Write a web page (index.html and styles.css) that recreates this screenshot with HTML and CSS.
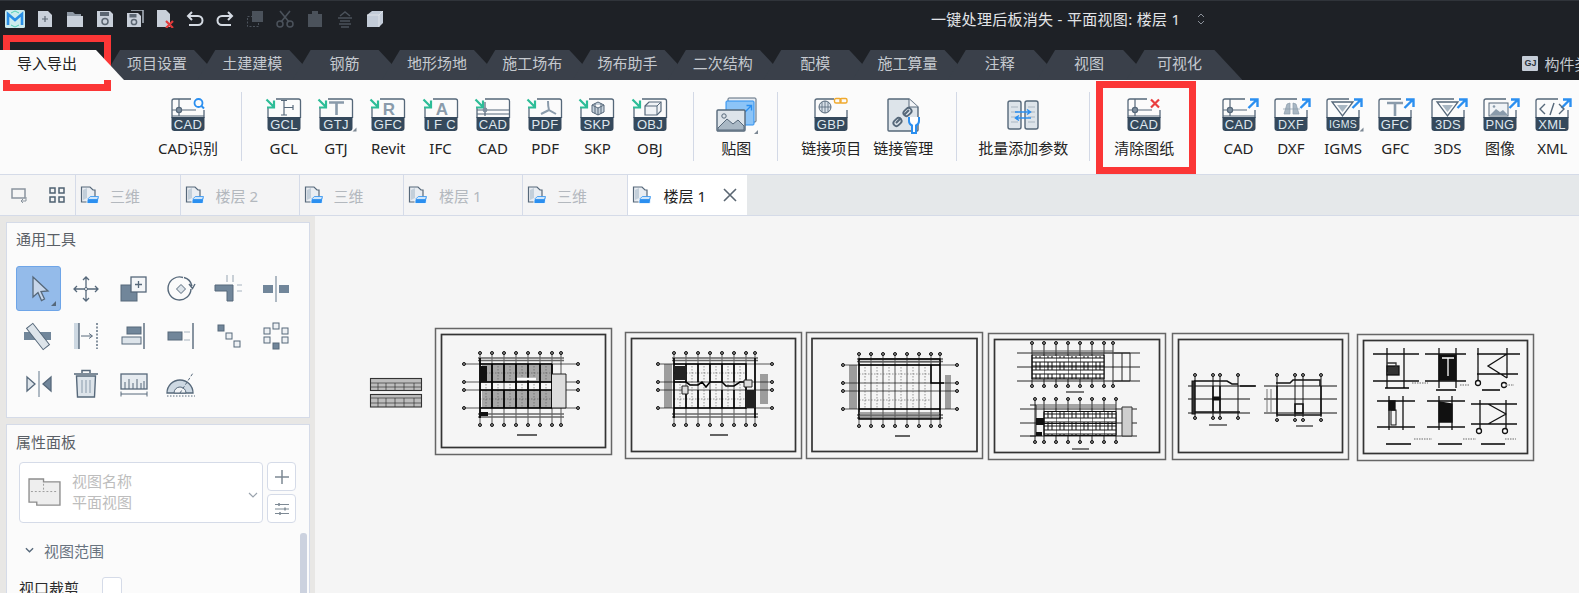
FILE: index.html
```html
<!DOCTYPE html>
<html lang="zh-CN">
<head>
<meta charset="utf-8">
<title>一键处理后板消失</title>
<link rel="stylesheet" href="styles.css">
</head>
<body>
<svg class="defs" aria-hidden="true">
  <defs>
    <g id="f-in">
      <path d="M14 1H36.5a2 2 0 0 1 2 2V20M6 9V20" fill="none" stroke="#56687a" stroke-width="1.3"/>
      <path d="M5.5 19h33v11a3 3 0 0 1-3 3h-27a3 3 0 0 1-3-3z" fill="#35495c"/>
      <path d="M4.5 1.5L11.5 8.5M12 2.5V9.5H5" fill="none" stroke="#2dbd97" stroke-width="2.2"/>
    </g>
    <g id="f-out">
      <path d="M6 20V3a2 2 0 0 1 2-2H28M38 12V20" fill="none" stroke="#56687a" stroke-width="1.3"/>
      <path d="M5.5 19h33v11a3 3 0 0 1-3 3h-27a3 3 0 0 1-3-3z" fill="#35495c"/>
      <path d="M31.5 10L39 2.5M33 1.5H40.5V9" fill="none" stroke="#2b8ff0" stroke-width="2.4"/>
    </g>
    <g id="cad-mark" fill="none" stroke="#56687a" stroke-width="1.2">
      <path d="M13 1V18M6 18H38M6 12H30"/>
      <circle cx="13" cy="12" r="2.6" fill="#7d8e9e"/>
    </g>
    <g id="tabdoc">
      <path d="M1.500 1H10L13 4H15V16H1.500Z" fill="#e9edf2" stroke="#56687a" stroke-width="1.200"/>
      <path d="M3 4L7 2V12L3 14Z" fill="#c3cfda"/>
      <path d="M7 14.500L10 11H19L18 17.500H7Z" fill="#2b8ff0" stroke="#fff" stroke-width=".8"/>
      <path d="M8 12.800L10.300 10.500H18.500L17.500 13.500H8Z" fill="#cfe6fb" stroke="#2b8ff0" stroke-width=".8"/>
    </g>
    <g id="axes" fill="none" stroke="#111" stroke-width=".7">
      <path d="M0 2V71M12 2V71M24 2V71M36 2V71M48 2V71M60 2V71M72 2V71M81 2V71"/>
      <path d="M-14 12H98M-14 30H98M-14 38H98M-14 56H98"/>
      <path d="M-2 6H84M-2 62H84M-2 8.500H84M-2 65H84" stroke="#666" stroke-width="1.300"/>
      <path d="M6 14V56M18 14V56M30 14V56M42 14V56M54 14V56M66 14V56M0 21H72M0 47H72" stroke="#555" stroke-width=".6" stroke-dasharray="1.500 1.500"/>
      <g fill="#888" stroke-width="1">
        <circle cx="0" cy="1" r="1.500"/><circle cx="12" cy="1" r="1.500"/><circle cx="24" cy="1" r="1.500"/><circle cx="36" cy="1" r="1.500"/><circle cx="48" cy="1" r="1.500"/><circle cx="60" cy="1" r="1.500"/><circle cx="72" cy="1" r="1.500"/><circle cx="81" cy="1" r="1.500"/>
        <circle cx="0" cy="73" r="1.500"/><circle cx="12" cy="73" r="1.500"/><circle cx="24" cy="73" r="1.500"/><circle cx="36" cy="73" r="1.500"/><circle cx="48" cy="73" r="1.500"/><circle cx="60" cy="73" r="1.500"/><circle cx="72" cy="73" r="1.500"/><circle cx="81" cy="73" r="1.500"/>
        <circle cx="-16" cy="12" r="1.500"/><circle cx="-16" cy="30" r="1.500"/><circle cx="-16" cy="38" r="1.500"/><circle cx="-16" cy="56" r="1.500"/>
        <circle cx="98" cy="12" r="1.500"/><circle cx="98" cy="30" r="1.500"/><circle cx="98" cy="38" r="1.500"/><circle cx="98" cy="56" r="1.500"/>
      </g>
    </g>
    <pattern id="win" width="12" height="12" patternUnits="userSpaceOnUse">
      <rect width="12" height="12" fill="#fff"/>
      <path d="M0 0V12M0 2H12M0 6H12M0 10H12M4 2V10M8 2V10" fill="none" stroke="#111" stroke-width="1"/>
    </pattern>
    <g id="sub" fill="none" stroke="#111" stroke-width="1.200">
      <path d="M0 0H72M0 12H72M0 24H72M0 0V24M72 0V24"/>
    </g>
  </defs>
</svg>

<header class="titlebar">
  <svg class="logo" viewBox="0 0 20 18"><rect width="20" height="18" rx="1.500" fill="#cdecee"/><path d="M3 15V4L10 10L17 4V15" fill="none" stroke="#2a8fe6" stroke-width="2.600"/><path d="M6 3L10 1L14 3M6 15L10 17L14 15" fill="none" stroke="#53d1b8"/></svg>
  <div class="quick">
    <svg class="qi" viewBox="0 0 18 18"><path d="M2 1H12L16 5V17H2Z" fill="#c9d0da"/><path d="M9 6V12M6 9H12" stroke="#5c6672" stroke-width="1.200"/></svg>
    <svg class="qi" viewBox="0 0 18 18"><path d="M1 2H7L9 4H15V6H1Z" fill="#8e98a4"/><path d="M1 6H17V17H1Z" fill="#c9d0da"/></svg>
    <svg class="qi" viewBox="0 0 18 18"><path d="M1 1H14L17 4V17H1Z" fill="#c9d0da"/><rect x="4" y="2" width="9" height="4" fill="#5c6672"/><circle cx="9" cy="11.500" r="3" fill="none" stroke="#5c6672" stroke-width="1.500"/></svg>
    <svg class="qi" viewBox="0 0 18 18"><path d="M5 0H17V13" fill="none" stroke="#aeb6c1" stroke-width="1.500"/><path d="M1 3H12L15 6V17H1Z" fill="#c9d0da"/><rect x="3.500" y="4" width="7" height="3.500" fill="#5c6672"/><circle cx="8" cy="12" r="2.600" fill="none" stroke="#5c6672" stroke-width="1.500"/></svg>
    <svg class="qi" viewBox="0 0 18 18"><path d="M1 0H10L14 4V17H1Z" fill="#c9d0da"/><path d="M10 11L17 18M17 11L10 18" stroke="#e23b3b" stroke-width="2.200"/></svg>
    <svg class="qi" viewBox="0 0 18 18"><path d="M6 2L2 6L6 10" fill="none" stroke="#d5dbe3" stroke-width="2"/><path d="M2.500 6H12a4.500 4.500 0 0 1 0 9H3" fill="none" stroke="#d5dbe3" stroke-width="2"/></svg>
    <svg class="qi" viewBox="0 0 18 18"><path d="M12 2L16 6L12 10" fill="none" stroke="#d5dbe3" stroke-width="2"/><path d="M15.500 6H6a4.500 4.500 0 0 0 0 9H15" fill="none" stroke="#d5dbe3" stroke-width="2"/></svg>
    <svg class="qi" viewBox="0 0 18 18"><rect x="6" y="1" width="11" height="11" fill="#4b525b"/><rect x="1.500" y="6.500" width="11" height="10" fill="none" stroke="#4b525b" stroke-dasharray="2 1.500"/></svg>
    <svg class="qi" viewBox="0 0 18 18"><path d="M4 1L13 12M14 1L5 12" stroke="#4b525b" stroke-width="1.600"/><circle cx="4" cy="14" r="3" fill="none" stroke="#4b525b" stroke-width="1.500"/><circle cx="14" cy="14" r="3" fill="none" stroke="#4b525b" stroke-width="1.500"/></svg>
    <svg class="qi" viewBox="0 0 18 18"><rect x="2" y="4" width="14" height="13" fill="#4b525b"/><rect x="6" y="1" width="6" height="4" fill="#4b525b"/></svg>
    <svg class="qi" viewBox="0 0 18 18"><path d="M4 6L9 2L14 6M2 8H16M4 11H14M3 14H15M5 17H13" fill="none" stroke="#4b525b" stroke-width="1.500"/></svg>
    <svg class="qi" viewBox="0 0 18 18"><path d="M1 5L6 1H17V13L13 17H1Z" fill="#c3ccd8"/><path d="M1 5H13V17M13 5L17 1" fill="none" stroke="#e4e8ee" stroke-width=".8"/></svg>
  </div>
  <div class="doc-title">一键处理后板消失 - 平面视图: 楼层 1</div>
  <svg class="updown" viewBox="0 0 8 14"><path d="M1 5L4 2L7 5M1 9L4 12L7 9" fill="none" stroke="#8b919a"/></svg>
</header>

<nav class="ribbon-tabs">
  <div class="rtab rtab-active">导入导出</div>
  <div class="rtab rtab-first">项目设置</div>
  <div class="rtab">土建建模</div>
  <div class="rtab rtab-2">钢筋</div>
  <div class="rtab">地形场地</div>
  <div class="rtab">施工场布</div>
  <div class="rtab">场布助手</div>
  <div class="rtab">二次结构</div>
  <div class="rtab rtab-2">配模</div>
  <div class="rtab">施工算量</div>
  <div class="rtab rtab-2">注释</div>
  <div class="rtab rtab-2">视图</div>
  <div class="rtab rtab-3">可视化</div>
  <div class="lib"><span class="lib-badge">GJ</span><span class="lib-name">构件类</span></div>
</nav>

<section class="ribbon">
  <div class="item w72">
    <svg class="ico" viewBox="0 0 44 36"><path d="M6 20V3a2 2 0 0 1 2-2H25M38 12V20" fill="none" stroke="#56687a" stroke-width="1.300"/><path d="M5.500 19h33v11a3 3 0 0 1-3 3h-27a3 3 0 0 1-3-3z" fill="#35495c"/><use href="#cad-mark"/><circle cx="32.500" cy="5" r="4" fill="none" stroke="#2b8ff0" stroke-width="1.800"/><path d="M35.500 8L38 10.500" stroke="#2b8ff0" stroke-width="2"/><text class="ic" x="22" y="30.500">CAD</text></svg>
    <span class="lbl">CAD识别</span>
  </div>
  <i class="sep"></i>
  <div class="item item-pull">
    <svg class="ico" viewBox="0 0 44 36"><use href="#f-in"/><path d="M19 2.500H25M22 2.500V17M19 17H25M22 9.500H31M31 7V12" fill="none" stroke="#56687a" stroke-width="1.200"/><text class="ic" x="22" y="30.500">GCL</text></svg>
    <span class="lbl">GCL</span>
  </div>
  <div class="item">
    <svg class="ico" viewBox="0 0 44 36"><use href="#f-in"/><path d="M15 4.500H30M22.500 4.500V17" fill="none" stroke="#8a9bab" stroke-width="2.600"/><path d="M38.500 33.500h4v-4z" fill="#7c8894"/><text class="ic" x="22" y="30.500">GTJ</text></svg>
    <span class="lbl">GTJ</span>
  </div>
  <div class="item">
    <svg class="ico" viewBox="0 0 44 36"><use href="#f-in"/><text class="gl" x="23" y="16.500">R</text><text class="ic" x="22" y="30.500">GFC</text></svg>
    <span class="lbl">Revit</span>
  </div>
  <div class="item">
    <svg class="ico" viewBox="0 0 44 36"><use href="#f-in"/><text class="gl" x="23" y="16.500">A</text><text class="ic" x="22" y="30.500">I F C</text></svg>
    <span class="lbl">IFC</span>
  </div>
  <div class="item">
    <svg class="ico" viewBox="0 0 44 36"><use href="#f-in"/><path d="M14 4V18M6 12H38" fill="none" stroke="#56687a" stroke-width="1.200"/><path d="M6 16H38" stroke="#56687a"/><circle cx="14" cy="12" r="2.400" fill="#7d8e9e"/><text class="ic" x="22" y="30.500">CAD</text></svg>
    <span class="lbl">CAD</span>
  </div>
  <div class="item">
    <svg class="ico" viewBox="0 0 44 36"><use href="#f-in"/><path d="M25 3C25 8 25 9 26 12L33 16M26 12L18 16" fill="none" stroke="#8a9bab" stroke-width="2"/><text class="ic" x="22" y="30.500">PDF</text></svg>
    <span class="lbl">PDF</span>
  </div>
  <div class="item">
    <svg class="ico" viewBox="0 0 44 36"><use href="#f-in"/><path d="M23 4L29 7V14L23 17L17 14V7ZM17 7L23 10L29 7M23 10V17M20 5.500V15.500M26 5.500V15.500" fill="#c6d1db" stroke="#56687a"/><text class="ic" x="22" y="30.500">SKP</text></svg>
    <span class="lbl">SKP</span>
  </div>
  <div class="item">
    <svg class="ico" viewBox="0 0 44 36"><use href="#f-in"/><path d="M17 8L21 4H33V13L29 17H17Z" fill="#f0f3f6" stroke="#56687a" stroke-width="1.200"/><path d="M17 8H29V17M29 8L33 4" fill="none" stroke="#56687a"/><text class="ic" x="22" y="30.500">OBJ</text></svg>
    <span class="lbl">OBJ</span>
  </div>
  <i class="sep"></i>
  <div class="item w48">
    <svg class="ico" viewBox="0 0 44 36"><rect x="14" y="0" width="28" height="24" rx="1" fill="#e9edf2" stroke="#56687a"/><rect x="12" y="3" width="28" height="24" rx="1" fill="#8cc4f7" stroke="#2b8ff0"/><path d="M31 14L37 8M32.500 7.500H37.500V12.500" fill="none" stroke="#2b8ff0" stroke-width="1.400"/><rect x="3" y="12" width="28" height="21" rx="1" fill="#dde4ea" stroke="#56687a" stroke-width="1.400"/><path d="M4 30L13 21L19 26L24 22L30 28V32H4Z" fill="#a9b8c5" stroke="#56687a"/><circle cx="10" cy="18" r="2.200" fill="none" stroke="#56687a"/><path d="M40 36h4v-4z" fill="#7c8894"/></svg>
    <span class="lbl">贴图</span>
  </div>
  <i class="sep"></i>
  <div class="item w72">
    <svg class="ico" viewBox="0 0 44 36"><path d="M6 20V3a2 2 0 0 1 2-2H25M38 12V20" fill="none" stroke="#56687a" stroke-width="1.300"/><path d="M5.500 19h33v11a3 3 0 0 1-3 3h-27a3 3 0 0 1-3-3z" fill="#35495c"/><circle cx="16" cy="9" r="6" fill="#d8e0e8" stroke="#56687a"/><path d="M10 9H22M16 3V15M13 4V14M19 4V14" stroke="#56687a" stroke-width=".8"/><rect x="25.500" y="0.500" width="6.500" height="4.500" rx="1.500" fill="none" stroke="#f0a92d" stroke-width="1.400"/><rect x="31" y="0.500" width="7" height="4.500" rx="1.500" fill="none" stroke="#f0a92d" stroke-width="1.400"/><text class="ic" x="22" y="30.500">GBP</text></svg>
    <span class="lbl">链接项目</span>
  </div>
  <div class="item w72">
    <svg class="ico" viewBox="0 0 44 36"><path d="M7 2a1 1 0 0 1 1-1H28L37 9V32a1 1 0 0 1-1 1H8a1 1 0 0 1-1-1Z" fill="#dde4ea" stroke="#56687a" stroke-width="1.400"/><path d="M28 1V9H37" fill="#f3f5f8" stroke="#56687a"/><path d="M15 25L20 20M23 17L28 12" stroke="#56687a" stroke-width="2"/><rect x="12" y="21" width="9" height="6" rx="3" transform="rotate(-45 16.500 24)" fill="none" stroke="#56687a" stroke-width="1.800"/><rect x="22" y="11" width="9" height="6" rx="3" transform="rotate(-45 26.500 14)" fill="none" stroke="#56687a" stroke-width="1.800"/><path d="M28 19V23a5 5 0 0 0 3 4.500V35H35V27.500a5 5 0 0 0 3-4.500V19" fill="#fff" stroke="#2b8ff0" stroke-width="2"/></svg>
    <span class="lbl">链接管理</span>
  </div>
  <i class="sep"></i>
  <div class="item w98">
    <svg class="ico" viewBox="0 0 44 36"><rect x="7" y="3" width="13" height="28" rx="2" fill="#dde4ea" stroke="#56687a" stroke-width="1.400"/><rect x="24" y="3" width="13" height="28" rx="2" fill="#dde4ea" stroke="#56687a" stroke-width="1.400"/><path d="M10 9H17M10 14H17M10 19H17M10 24H17M27 9H34M27 14H34M27 19H34M27 24H34" stroke="#aab6c1"/><path d="M14 14H29M26 11.500L29.500 14L26 16.500M30 20H15M18 17.500L14.500 20L18 22.500" fill="none" stroke="#2b8ff0" stroke-width="1.500"/></svg>
    <span class="lbl">批量添加参数</span>
  </div>
  <i class="sep"></i>
  <div class="item w74">
    <svg class="ico" viewBox="0 0 44 36"><path d="M6 20V3a2 2 0 0 1 2-2H25M38 12V20" fill="none" stroke="#56687a" stroke-width="1.300"/><path d="M5.500 19h33v11a3 3 0 0 1-3 3h-27a3 3 0 0 1-3-3z" fill="#35495c"/><use href="#cad-mark"/><path d="M29 1.500L37 9.500M37 1.500L29 9.500" stroke="#ea3f3f" stroke-width="2.200"/><text class="ic" x="22" y="30.500">CAD</text></svg>
    <span class="lbl">清除图纸</span>
  </div>
  <div class="item item-gap">
    <svg class="ico" viewBox="0 0 44 36"><use href="#f-out"/><use href="#cad-mark"/><text class="ic" x="22" y="30.500">CAD</text></svg>
    <span class="lbl">CAD</span>
  </div>
  <div class="item">
    <svg class="ico" viewBox="0 0 44 36"><use href="#f-out"/><path d="M15 16L18 6L21 5V16ZM24 5L27 6L30 16H24ZM14 11H31" fill="#a9b7c3" stroke="#8a9bab" stroke-width=".7"/><text class="ic ic-sm" x="22" y="30.500">DXF</text></svg>
    <span class="lbl">DXF</span>
  </div>
  <div class="item">
    <svg class="ico" viewBox="0 0 44 36"><use href="#f-out"/><path d="M11 4H32L21.500 18Z" fill="none" stroke="#56687a" stroke-width="1.300"/><path d="M16 7H27L21.500 14Z" fill="#a9b7c3"/><path d="M38.500 33.500h4v-4z" fill="#7c8894"/><text class="ic ic-xs" x="22" y="30">IGMS</text></svg>
    <span class="lbl">IGMS</span>
  </div>
  <div class="item">
    <svg class="ico" viewBox="0 0 44 36"><use href="#f-out"/><path d="M14 5H30M22 5V18" fill="none" stroke="#8a9bab" stroke-width="2.600"/><text class="ic" x="22" y="30.500">GFC</text></svg>
    <span class="lbl">GFC</span>
  </div>
  <div class="item">
    <svg class="ico" viewBox="0 0 44 36"><use href="#f-out"/><path d="M11 4H32L21.500 18Z" fill="none" stroke="#56687a" stroke-width="1.300"/><path d="M16 7H27L21.500 14Z" fill="#a9b7c3"/><text class="ic" x="22" y="30.500">3DS</text></svg>
    <span class="lbl">3DS</span>
  </div>
  <div class="item">
    <svg class="ico" viewBox="0 0 44 36"><use href="#f-out"/><rect x="11" y="5" width="19" height="13" fill="#f0f3f6" stroke="#56687a"/><path d="M12 17L18 11L22 14L25 12L29 16V17Z" fill="#8a9bab"/><circle cx="16" cy="8.500" r="1.300" fill="#8a9bab"/><text class="ic" x="22" y="30.500">PNG</text></svg>
    <span class="lbl">图像</span>
  </div>
  <div class="item">
    <svg class="ico" viewBox="0 0 44 36"><use href="#f-out"/><path d="M15 6L10 11L15 16M29 6L34 11L29 16M24 5L20 17" fill="none" stroke="#56687a" stroke-width="1.400"/><text class="ic" x="22" y="30.500">XML</text></svg>
    <span class="lbl">XML</span>
  </div>
</section>

<section class="viewtabs">
  <div class="vt-tools">
    <svg class="vt-ico" viewBox="0 0 18 18"><path d="M2 3H15V12H2Z" fill="none" stroke="#8a949e" stroke-width="1.500"/><path d="M11 15H16V11M11 15L13 13M11 15L13 17" fill="none" stroke="#8a949e"/></svg>
    <svg class="vt-ico" viewBox="0 0 18 18"><path d="M2 2H7V7H2ZM11 2H16V7H11ZM2 11H7V16H2ZM11 11H16V16H11Z" fill="none" stroke="#4f6172" stroke-width="1.500"/></svg>
  </div>
  <div class="vt vt-a"><svg class="vt-doc" viewBox="0 0 20 18"><use href="#tabdoc"/></svg><span>三维</span></div>
  <div class="vt vt-b"><svg class="vt-doc" viewBox="0 0 20 18"><use href="#tabdoc"/></svg><span>楼层 2</span></div>
  <div class="vt vt-a"><svg class="vt-doc" viewBox="0 0 20 18"><use href="#tabdoc"/></svg><span>三维</span></div>
  <div class="vt vt-b"><svg class="vt-doc" viewBox="0 0 20 18"><use href="#tabdoc"/></svg><span>楼层 1</span></div>
  <div class="vt vt-a"><svg class="vt-doc" viewBox="0 0 20 18"><use href="#tabdoc"/></svg><span>三维</span></div>
  <div class="vt vt-b vt-on"><svg class="vt-doc" viewBox="0 0 20 18"><use href="#tabdoc"/></svg><span>楼层 1</span><svg class="vt-x" viewBox="0 0 14 14"><path d="M1 1L13 13M13 1L1 13" stroke="#5a6672" stroke-width="1.600"/></svg></div>
</section>

<main class="main">
  <aside class="side">
    <section class="panel panel-tools">
      <h2 class="ptitle">通用工具</h2>
      <div class="tools">
        <div class="tool tool-on"><svg class="ti" viewBox="0 0 30 30"><path d="M9 3V23L14 18.500L17.500 26.500L20.500 25L17 17.500L24 17Z" fill="#c7d6ea" stroke="#56687a" stroke-width="1.300"/></svg><i class="tool-corner"></i></div>
        <div class="tool"><svg class="ti" viewBox="0 0 30 30"><path d="M15 3V27M3 15H27M12 6L15 3L18 6M12 24L15 27L18 24M6 12L3 15L6 18M24 12L27 15L24 18" fill="none" stroke="#56687a" stroke-width="1.300"/><circle cx="15" cy="15" r="1.500" fill="#fff" stroke="#56687a"/></svg></div>
        <div class="tool"><svg class="ti" viewBox="0 0 30 30"><rect x="2" y="11" width="16" height="16" fill="#71869a" stroke="#56687a"/><rect x="12" y="3" width="15" height="15" fill="#f4f6f8" stroke="#56687a" stroke-width="1.300"/><path d="M19.500 7V14M16 10.500H23" stroke="#56687a" stroke-width="1.300"/></svg></div>
        <div class="tool"><svg class="ti" viewBox="0 0 30 30"><path d="M25 15A11.500 11.500 0 1 1 17 3.500" fill="none" stroke="#56687a" stroke-width="1.400"/><path d="M18 3.500C22 4.500 25 8 26 12M23 10L26.500 14.500L29 10" fill="none" stroke="#56687a" stroke-width="1.400"/><path d="M15 10.500L19.500 15L15 19.500L10.500 15Z" fill="#dde4ea" stroke="#56687a"/></svg></div>
        <div class="tool"><svg class="ti" viewBox="0 0 30 30"><path d="M1 11H19V27H13V17H1Z" fill="#71869a" stroke="#56687a"/><path d="M13 1V8M19 1V8M23 11H28M23 17H28" stroke="#a8b4bf" stroke-width="1.200"/></svg></div>
        <div class="tool"><svg class="ti" viewBox="0 0 30 30"><rect x="2" y="11" width="10" height="8" fill="#71869a"/><rect x="18" y="11" width="10" height="8" fill="#71869a"/><path d="M15 2V28" stroke="#7c8e9e" stroke-width="1.200"/></svg></div>
        <div class="tool"><svg class="ti" viewBox="0 0 30 30"><rect x="0" y="11" width="27" height="8" fill="#71869a"/><rect x="10" y="2" width="8" height="27" transform="rotate(-38 14 15.500)" fill="#dde4ea" stroke="#56687a"/></svg></div>
        <div class="tool"><svg class="ti" viewBox="0 0 30 30"><rect x="3" y="2" width="5" height="26" fill="#cdd8e2"/><path d="M8 2V28" stroke="#56687a" stroke-width="1.400"/><path d="M10 15H21M18 12.500L21.500 15L18 17.500" fill="none" stroke="#56687a"/><path d="M26 2V28" stroke="#56687a" stroke-width="1.400" stroke-dasharray="2 1.500"/></svg></div>
        <div class="tool"><svg class="ti" viewBox="0 0 30 30"><rect x="8" y="6" width="14" height="7" fill="#71869a" stroke="#56687a"/><rect x="3" y="16" width="19" height="7" fill="#dde4ea" stroke="#56687a"/><path d="M25 2V28" stroke="#56687a" stroke-width="1.400"/></svg></div>
        <div class="tool"><svg class="ti" viewBox="0 0 30 30"><rect x="2" y="11" width="14" height="8" fill="#71869a" stroke="#56687a"/><path d="M18 11H24M18 19H24" stroke="#a8b4bf"/><path d="M27 2V28" stroke="#56687a" stroke-width="1.400"/></svg></div>
        <div class="tool"><svg class="ti" viewBox="0 0 30 30"><rect x="4" y="4" width="6" height="6" fill="#71869a" stroke="#56687a"/><rect x="12" y="12" width="6" height="6" fill="#eef1f4" stroke="#56687a"/><rect x="20" y="20" width="6" height="6" fill="#eef1f4" stroke="#56687a"/></svg></div>
        <div class="tool"><svg class="ti" viewBox="0 0 30 30"><rect x="12" y="2" width="6" height="6" fill="#eef1f4" stroke="#56687a"/><rect x="21" y="7" width="6" height="6" fill="#eef1f4" stroke="#56687a"/><rect x="21" y="16" width="6" height="6" fill="#eef1f4" stroke="#56687a"/><rect x="12" y="22" width="6" height="6" fill="#71869a" stroke="#56687a"/><rect x="3" y="16" width="6" height="6" fill="#eef1f4" stroke="#56687a"/><rect x="3" y="7" width="6" height="6" fill="#eef1f4" stroke="#56687a"/></svg></div>
        <div class="tool"><svg class="ti" viewBox="0 0 30 30"><path d="M3 8L11 15L3 22Z" fill="#dde4ea" stroke="#56687a" stroke-width="1.300"/><path d="M27 8L19 15L27 22Z" fill="#71869a" stroke="#56687a" stroke-width="1.300"/><path d="M15 2V28" stroke="#7c8e9e" stroke-width="1.200"/></svg></div>
        <div class="tool"><svg class="ti" viewBox="0 0 30 30"><path d="M11 4V1.500H19V4M3 5H27" fill="none" stroke="#56687a" stroke-width="1.500"/><path d="M5.500 7H24.500L23.500 28H6.500Z" fill="#dde4ea" stroke="#56687a" stroke-width="1.400"/><path d="M11 11V24M15 11V24M19 11V24" stroke="#8a9bab"/></svg></div>
        <div class="tool"><svg class="ti" viewBox="0 0 30 30"><rect x="2" y="5" width="26" height="15" fill="#e6ebf0" stroke="#56687a" stroke-width="1.300"/><path d="M6 20V13M10 20V10M14 20V14M18 20V10M22 20V14M25 20V12" stroke="#56687a"/><path d="M2 25H28M2 22.500V27.500M28 22.500V27.500" stroke="#56687a"/></svg></div>
        <div class="tool"><svg class="ti" viewBox="0 0 30 30"><path d="M1 24A13 13 0 0 1 27 24Z" fill="#cdd8e2" stroke="#56687a" stroke-width="1.300"/><path d="M8 24A6 6 0 0 1 20 24Z" fill="#f2f4f6" stroke="#56687a"/><path d="M14 24L27 4" stroke="#56687a" stroke-dasharray="3 2"/><path d="M1 27H29" stroke="#56687a" stroke-dasharray="1.500 1.500"/></svg></div>
      </div>
    </section>
    <section class="panel panel-props">
      <h2 class="ptitle">属性面板</h2>
      <div class="selrow">
        <div class="sel">
          <svg class="sel-ico" viewBox="0 0 34 30"><path d="M1 1H16V4H33V28H9V25H1Z" fill="#eeeeee" stroke="#8d8d8d" stroke-width="1.400"/><path d="M3 14H31M16 6V14" stroke="#9a9a9a" stroke-dasharray="2 2"/></svg>
          <div class="sel-txt"><div>视图名称</div><div>平面视图</div></div>
          <svg class="chev" viewBox="0 0 10 6"><path d="M1 1L5 5L9 1" fill="none" stroke="#9aa3ad" stroke-width="1.200"/></svg>
        </div>
        <div class="selbtns">
          <div class="sbtn"><svg class="sbtn-ico" viewBox="0 0 14 14"><path d="M7 0V14M0 7H14" stroke="#7d8994" stroke-width="1.500"/></svg></div>
          <div class="sbtn"><svg class="sbtn-ico" viewBox="0 0 14 14"><path d="M0 2.500H14M0 7H14M0 11.500H14" stroke="#7d8994" stroke-width="1.200"/><path d="M4 1V4M10 5.500V8.500M5 10V13" stroke="#7d8994" stroke-width="1.500"/></svg></div>
        </div>
      </div>
      <div class="section-head">
        <svg class="sec-chev" viewBox="0 0 10 6"><path d="M1 1L5 5L9 1" fill="none" stroke="#56687a" stroke-width="1.500"/></svg>
        <span>视图范围</span>
      </div>
      <div class="prop-row"><span>视口裁剪</span><i class="check"></i></div>
      <i class="scrollbar"></i>
    </section>
  </aside>

  <div class="canvas">
    <svg class="drawing" viewBox="315 216 1264 377">
      <!-- legend tables -->
      <g fill="#fff" stroke="#333" stroke-width="1.100">
        <rect x="370.500" y="378.500" width="51" height="12" fill="#bdbdbd"/>
        <rect x="370.500" y="394.500" width="51" height="12.500" fill="#bdbdbd"/>
        <path d="M371 383H421M371 387H421M371 398H421M371 403H421M378 383V390M386 383V390M395 383V390M404 383V390M414 383V390M378 398V407M386 398V407M395 398V407M404 398V407M414 398V407" stroke-width=".7"/>
      </g>
      <!-- sheet frames -->
      <g fill="none" stroke="#666" stroke-width="1.500">
        <rect x="435.500" y="328.500" width="176" height="126"/>
        <rect x="625.500" y="332.500" width="176" height="126"/>
        <rect x="806.500" y="332.500" width="176" height="126"/>
        <rect x="988.500" y="333.500" width="177" height="126"/>
        <rect x="1172.500" y="333.500" width="176" height="126"/>
        <rect x="1357.500" y="334.500" width="176" height="126"/>
      </g>
      <g fill="none" stroke="#333" stroke-width="1.700">
        <rect x="441.500" y="334.500" width="164" height="113"/>
        <rect x="631.500" y="338.500" width="164" height="113"/>
        <rect x="812" y="338.500" width="165" height="113"/>
        <rect x="994.500" y="339.500" width="165" height="113"/>
        <rect x="1178.500" y="339.500" width="164" height="113"/>
        <rect x="1363.500" y="340.500" width="164" height="113"/>
      </g>

      <!-- sheet 1 -->
      <g transform="translate(480 352)">
        <path d="M2 13H72V30H2ZM2 38H72V56H2Z" fill="#a8a8a8"/>
        <use href="#axes"/>
        <path d="M0 12H72M0 30H72M0 38H72M0 56H72M12 12V56M24 12V30M24 38V56M36 12V56M48 12V56M60 12V56M72 12V56M0 6V66" fill="none" stroke="#000" stroke-width="1.700"/>
        <path d="M0 14H7V30H0ZM73 40H80V56H73ZM0 60H8V64H0Z" fill="#111"/>
        <path d="M72 22H86V56H72" fill="#ddd" stroke="#222"/>
        <path d="M37 27H56" stroke="#fff" stroke-width="2.500"/>
        <path d="M37 83H57" stroke="#000" stroke-width="1.200"/>
      </g>
      <!-- sheet 2 -->
      <g transform="translate(674 352)">
        <path d="M-10 12H-2V56H-10ZM86 22H94V52H86Z" fill="#9d9d9d"/>
        <use href="#axes"/>
        <path d="M0 12H72V56H0ZM12 12V30M24 12V30M36 12V30M48 12V30M60 12V30M12 38V56M24 38V56M36 38V56M48 38V56M60 38V56M0 30H12L16 33H24L28 30L32 35L36 30H48L52 34H60L66 30H74M81 6V66M0 6V66" fill="none" stroke="#000" stroke-width="1.600"/>
        <path d="M1 14H12V28H1ZM72 38H82V56H72Z" fill="#222"/>
        <path d="M8 34H14V42H8ZM70 28H78V35H70Z" fill="#ddd" stroke="#222"/>
        <path d="M36 83H54" stroke="#000" stroke-width="1.200"/>
      </g>
      <!-- sheet 3 -->
      <g transform="translate(859 353)">
        <path d="M-10 12H-2V56H-10ZM86 22H92V56H86Z" fill="#9d9d9d"/>
        <use href="#axes"/>
        <path d="M0 6H81V66H0ZM0 12H81M0 56H81M72 12V30H85" fill="none" stroke="#000" stroke-width="1.500"/>
        <path d="M0 9H81M0 60H81M0 63H81" stroke="#555"/>
        <path d="M36 83H51" stroke="#000" stroke-width="1.200"/>
      </g>
      <!-- sheet 4 -->
      <g>
        <g fill="none" stroke="#111" stroke-width=".9">
          <path d="M1032 344V386M1044 344V386M1056 344V386M1068 344V386M1080 344V386M1092 344V386M1104 344V386M1113 344V386"/>
          <path d="M1017 353H1140M1017 367H1140M1017 381H1140"/>
          <path d="M1035 400V442M1044 400V442M1056 400V442M1068 400V442M1080 400V442M1092 400V442M1104 400V442M1116 400V442"/>
          <path d="M1020 423H1137M1020 436H1137M1020 409H1137"/>
        </g>
        <rect x="1032" y="356" width="72" height="23" fill="url(#win)"/>
        <use href="#sub" x="1032" y="355"/>
        <rect x="1044" y="412" width="72" height="23" fill="url(#win)"/>
        <use href="#sub" x="1044" y="411.500"/>
        <path d="M1032 351H1113M1032 353H1113M1035 405H1116M1035 407H1116" stroke="#555" stroke-width="1.200"/>
        <path d="M1114 353H1130V381H1114M1122 353V381" fill="none" stroke="#222"/>
        <path d="M1030 405H1036V436H1030" fill="none" stroke="#222"/>
        <path d="M1036 418H1044V425H1036ZM1036 432H1042V436H1036Z" fill="#111"/>
        <path d="M1122 407H1132V436H1122Z" fill="#cfcfcf" stroke="#333"/>
        <g fill="#888" stroke="#111">
          <circle cx="1032" cy="343" r="1.500"/><circle cx="1044" cy="343" r="1.500"/><circle cx="1056" cy="343" r="1.500"/><circle cx="1068" cy="343" r="1.500"/><circle cx="1080" cy="343" r="1.500"/><circle cx="1092" cy="343" r="1.500"/><circle cx="1104" cy="343" r="1.500"/><circle cx="1113" cy="343" r="1.500"/>
          <circle cx="1032" cy="386" r="1.500"/><circle cx="1044" cy="386" r="1.500"/><circle cx="1056" cy="386" r="1.500"/><circle cx="1068" cy="386" r="1.500"/><circle cx="1080" cy="386" r="1.500"/><circle cx="1092" cy="386" r="1.500"/><circle cx="1104" cy="386" r="1.500"/><circle cx="1113" cy="386" r="1.500"/>
          <circle cx="1035" cy="399" r="1.500"/><circle cx="1044" cy="399" r="1.500"/><circle cx="1056" cy="399" r="1.500"/><circle cx="1068" cy="399" r="1.500"/><circle cx="1080" cy="399" r="1.500"/><circle cx="1092" cy="399" r="1.500"/><circle cx="1104" cy="399" r="1.500"/><circle cx="1116" cy="399" r="1.500"/>
          <circle cx="1035" cy="442" r="1.500"/><circle cx="1044" cy="442" r="1.500"/><circle cx="1056" cy="442" r="1.500"/><circle cx="1068" cy="442" r="1.500"/><circle cx="1080" cy="442" r="1.500"/><circle cx="1092" cy="442" r="1.500"/><circle cx="1104" cy="442" r="1.500"/><circle cx="1116" cy="442" r="1.500"/>
        </g>
        <path d="M1066 392H1084M1072 449H1089" stroke="#000" stroke-width="1.200"/>
      </g>
      <!-- sheet 5 -->
      <g fill="none" stroke="#111" stroke-width="1">
        <path d="M1195 376V417M1213 376V417M1220 376V417M1238 376V417M1188 386H1255M1188 399H1250M1188 413H1250M1277 376V417M1295 376V417M1303 376V417M1321 376V417M1264 386H1337M1264 399H1337M1264 413H1337"/>
        <path d="M1194 381H1227L1232 384H1238M1240 386H1256M1213 386V412H1220V386M1195 412H1240M1277 386V415H1321V386M1276 383H1290L1293 380H1320V386M1295 404H1303V413H1295Z" stroke-width="1.500"/>
        <path d="M1267 389V412M1271 389V412" stroke="#777"/>
        <rect x="1192" y="381" width="3" height="33" fill="#333"/>
        <rect x="1213" y="397" width="7" height="3" fill="#111"/>
        <g fill="#888"><circle cx="1195" cy="375" r="1.500"/><circle cx="1213" cy="375" r="1.500"/><circle cx="1220" cy="375" r="1.500"/><circle cx="1238" cy="375" r="1.500"/><circle cx="1195" cy="418" r="1.500"/><circle cx="1213" cy="418" r="1.500"/><circle cx="1220" cy="418" r="1.500"/><circle cx="1238" cy="418" r="1.500"/><circle cx="1277" cy="375" r="1.500"/><circle cx="1295" cy="375" r="1.500"/><circle cx="1303" cy="375" r="1.500"/><circle cx="1321" cy="375" r="1.500"/><circle cx="1277" cy="420" r="1.500"/><circle cx="1295" cy="420" r="1.500"/><circle cx="1303" cy="420" r="1.500"/><circle cx="1321" cy="420" r="1.500"/></g>
        <path d="M1209 425H1227M1296 426H1313" stroke="#000" stroke-width="1.200"/>
      </g>
      <!-- sheet 6 -->
      <g fill="none" stroke="#111" stroke-width="1.300">
        <path d="M1373 354H1419M1373 381H1419M1387 348V388M1404 348V388"/>
        <path d="M1425 354H1466M1425 381H1466M1439 348V388M1456 348V388"/>
        <path d="M1477 354H1520M1477 374H1518M1478 348V380M1507 348V378M1507 354L1488 366L1507 378"/>
        <path d="M1377 401H1415M1377 427H1415M1389 396V430M1403 396V430"/>
        <path d="M1427 401H1465M1427 427H1465M1439 396V430M1452 396V430"/>
        <path d="M1471 404H1517M1471 424H1517M1480 400V432M1506 400V432M1488 404L1506 414L1488 424"/>
        <rect x="1387" y="366" width="12" height="9" fill="#333"/>
        <path d="M1387 363H1396V373H1387" stroke="#333"/>
        <path d="M1439 355H1456V380H1439Z" fill="#111"/>
        <path d="M1442 358H1454M1448 358V376" stroke="#fff"/>
        <path d="M1389 401H1395V410H1389Z" fill="#111"/>
        <rect x="1391" y="410" width="5" height="15" stroke-width="1"/>
        <path d="M1439 402L1452 404V422H1439Z" fill="#111"/>
        <circle cx="1478" cy="383" r="2.500" fill="#fff"/><circle cx="1504" cy="385" r="2.500" fill="#fff"/>
        <circle cx="1479" cy="431" r="2.500" fill="#fff"/><circle cx="1505" cy="431" r="2.500" fill="#fff"/>
        <path d="M1385 388H1409M1436 390H1456M1482 390H1500M1386 444H1411M1438 444H1462M1481 444H1505" stroke="#000"/>
        <path d="M1412 383H1428M1460 385H1470M1506 385H1514M1414 439H1432M1463 439H1476M1505 439H1516" stroke="#999" stroke-dasharray="1.500 1"/>
      </g>
    </svg>
  </div>
</main>

<div class="mark mark-tab"></div>
<div class="mark mark-btn"></div>
</body>
</html>
```
FILE: styles.css
```css
* { box-sizing: border-box; }
html, body { margin: 0; padding: 0; width: 1579px; height: 593px; overflow: hidden; }
body {
  position: relative;
  display: flex;
  flex-direction: column;
  background: #f5f5f5;
  color: #222;
  font-family: "Noto Sans", "Noto Sans CJK SC", sans-serif;
  font-size: 15px;
}
.defs { position: absolute; width: 0; height: 0; }

/* title bar */
.titlebar {
  flex: none;
  height: 50px;
  display: flex;
  align-items: flex-start;
  padding: 9px 0 0 5px;
  background: #1e2126;
  border-top: 1px solid #30343a;
}
.logo { width: 20px; height: 18px; flex: none; }
.quick { display: flex; gap: 12px; margin-left: 11px; flex: none; }
.qi { width: 18px; height: 18px; display: block; }
.doc-title {
  margin-left: 547px;
  color: #e2e4e7;
  font-size: 15px;
  line-height: 18px;
  letter-spacing: .3px;
  white-space: nowrap;
}
.updown { width: 8px; height: 14px; margin: 2px 0 0 17px; }

/* ribbon tabs */
.ribbon-tabs {
  flex: none;
  height: 30px;
  display: flex;
  align-items: stretch;
  background: #1e2126;
  overflow: hidden;
}
.rtab {
  flex: none;
  width: 120px;
  margin-left: -24.7px;
  padding-right: 10px;
  text-align: center;
  line-height: 27px;
  color: #c5c9cf;
  background: #3a404a;
  clip-path: polygon(18px 0, calc(100% - 28px) 0, 100% 100%, 0 100%);
  white-space: nowrap;
}
.rtab-2 { width: 114px; }
.rtab-3 { width: 116px; }
.rtab-first { margin-left: -22px; }
.rtab-active {
  position: relative;
  z-index: 2;
  width: 124px;
  margin-left: 0;
  padding: 0 0 0 17px;
  text-align: left;
  color: #222;
  background: #fbfbfb;
  clip-path: polygon(0 0, 96px 0, 100% 100%, 0 100%);
}
.lib {
  flex: none;
  display: flex;
  align-items: center;
  gap: 6px;
  margin-left: 280px;
  padding-bottom: 3px;
  white-space: nowrap;
  color: #c5c9cf;
}
.lib-badge {
  width: 16px;
  height: 15px;
  background: #c5cdd8;
  color: #2c3540;
  font: bold 9px/15px "Liberation Sans", sans-serif;
  text-align: center;
  border-radius: 1px;
}

/* ribbon */
.ribbon {
  flex: none;
  height: 94px;
  display: flex;
  align-items: flex-start;
  padding: 18px 0 0 152px;
  background: #fbfbfb;
  overflow: hidden;
}
.item {
  flex: none;
  width: 52.3px;
  display: flex;
  flex-direction: column;
  align-items: center;
}
.w48 { width: 48px; margin-left: 1.5px; }
.w72 { width: 72px; }
.w74 { width: 74px; }
.w98 { width: 98px; }
.item-gap { margin-left: 31px; }
.item-pull { margin-left: -1.5px; }
.ico { width: 44px; height: 36px; display: block; overflow: visible; }
.lbl {
  margin-top: 3px;
  line-height: 22px;
  white-space: nowrap;
  color: #232323;
}
.ic {
  font: 13px "Liberation Sans", sans-serif;
  text-anchor: middle;
  fill: #dfe7ee;
  letter-spacing: .3px;
}
.ic-sm { font-size: 12.5px; }
.ic-xs { font-size: 10.5px; }
.gl {
  font: bold 17px "Liberation Sans", sans-serif;
  text-anchor: middle;
  fill: #8a9bab;
}
.sep {
  flex: none;
  width: 1px;
  height: 69px;
  margin: -6px 17px 0;
  background: #d3d9e6;
}

/* view tabs */
.viewtabs {
  flex: none;
  height: 42px;
  display: flex;
  background: #e5e8ea;
  border-top: 1px solid #d5dbe8;
  border-bottom: 1px solid #d5dbe8;
}
.vt-tools {
  flex: none;
  width: 76px;
  display: flex;
  align-items: center;
  gap: 20px;
  padding-left: 10px;
  background: #f5f5f5;
  border-right: 1px solid #d5dbe8;
}
.vt-ico { width: 18px; height: 18px; }
.vt {
  flex: none;
  display: flex;
  align-items: center;
  padding-left: 4px;
  background: #f4f4f5;
  border-right: 1px solid #d5dbe8;
  color: #b3b8be;
  white-space: nowrap;
}
.vt-a { width: 104.500px; }
.vt-b { width: 119px; }
.vt-doc { width: 20px; height: 18px; margin-right: 10px; flex: none; }
.vt-b .vt-doc { margin-right: 11px; }
.vt-on { background: #fff; color: #222; border-right: 0; }
.vt-on .vt-doc { margin-right: 12px; }
.vt-x { width: 14px; height: 14px; margin-left: 17px; }

/* main */
.main { flex: 1; min-height: 0; display: flex; overflow: hidden; }
.side {
  flex: none;
  width: 315px;
  display: flex;
  flex-direction: column;
  gap: 6px;
  padding: 6px 5px 0 6px;
  background: #e8e7e5;
}
.panel {
  border: 1px solid #d5dbe8;
  background: #fbfbfb;
}
.panel-tools { flex: none; height: 196px; padding: 4px 9px 0; }
.panel-props { flex: 1; min-height: 0; position: relative; padding: 5px 0 0 12px; border-bottom: 0; overflow: hidden; }
.ptitle {
  margin: 0;
  font-size: 15px;
  font-weight: 400;
  line-height: 24px;
  color: #5a5f66;
}
.panel-props .ptitle { margin-left: -3px; }
.tools {
  display: grid;
  grid-template-columns: repeat(6, 45px);
  grid-auto-rows: 45px;
  column-gap: 2.6px;
  row-gap: 2.5px;
  margin-top: 15px;
}
.tool {
  position: relative;
  display: flex;
  align-items: center;
  justify-content: center;
  border: 1px solid transparent;
  border-radius: 3px;
}
.tool-on { background: #94bbea; border-color: #6ea5e8; }
.tool-corner {
  position: absolute;
  right: 4px;
  bottom: 4px;
  width: 0;
  height: 0;
  border-left: 5px solid transparent;
  border-bottom: 5px solid #56687a;
}
.ti { width: 30px; height: 30px; display: block; }

.selrow { display: flex; gap: 4px; margin-top: 8px; }
.sel {
  flex: none;
  width: 244px;
  height: 61px;
  display: flex;
  align-items: center;
  padding-left: 8px;
  background: #fff;
  border: 1px solid #d5dbe8;
  border-radius: 4px;
}
.sel-ico { width: 33px; height: 29px; flex: none; }
.sel-txt { margin: -2px 0 0 11px; color: #bdbdbd; line-height: 21px; }
.chev { width: 10px; height: 6px; margin: 4px 0 0 auto; margin-right: 4px; }
.selbtns { flex: none; display: flex; flex-direction: column; gap: 3px; }
.sbtn {
  width: 29px;
  height: 29px;
  display: flex;
  align-items: center;
  justify-content: center;
  background: #fff;
  border: 1px solid #d5dbe8;
  border-radius: 4px;
}
.sbtn-ico { width: 14px; height: 14px; }
.section-head {
  display: flex;
  align-items: center;
  height: 24px;
  margin-top: 15px;
  padding-left: 6px;
  color: #68737f;
}
.sec-chev { width: 9px; height: 6px; margin-right: 10px; }
.prop-row {
  display: flex;
  align-items: center;
  height: 24px;
  margin-top: 13px;
  color: #2b2b2b;
  white-space: nowrap;
}
.check {
  width: 20px;
  height: 20px;
  margin-left: 23px;
  background: #fff;
  border: 1px solid #d5dbe8;
  border-radius: 3px;
}
.scrollbar {
  position: absolute;
  left: 293px;
  top: 108px;
  bottom: 0;
  width: 7px;
  border-radius: 3px 3px 0 0;
  background: #ccd2df;
}

/* canvas */
.canvas { flex: 1; min-width: 0; background: #f5f5f5; }
.drawing { display: block; width: 1264px; height: 377px; filter: blur(.45px); }

/* review marks */
.mark { position: absolute; border: 7px solid #fb3636; }
.mark-tab { left: 3px; top: 35px; width: 108px; height: 56px; }
.mark-btn { left: 1096px; top: 81px; width: 100px; height: 93px; }
```
